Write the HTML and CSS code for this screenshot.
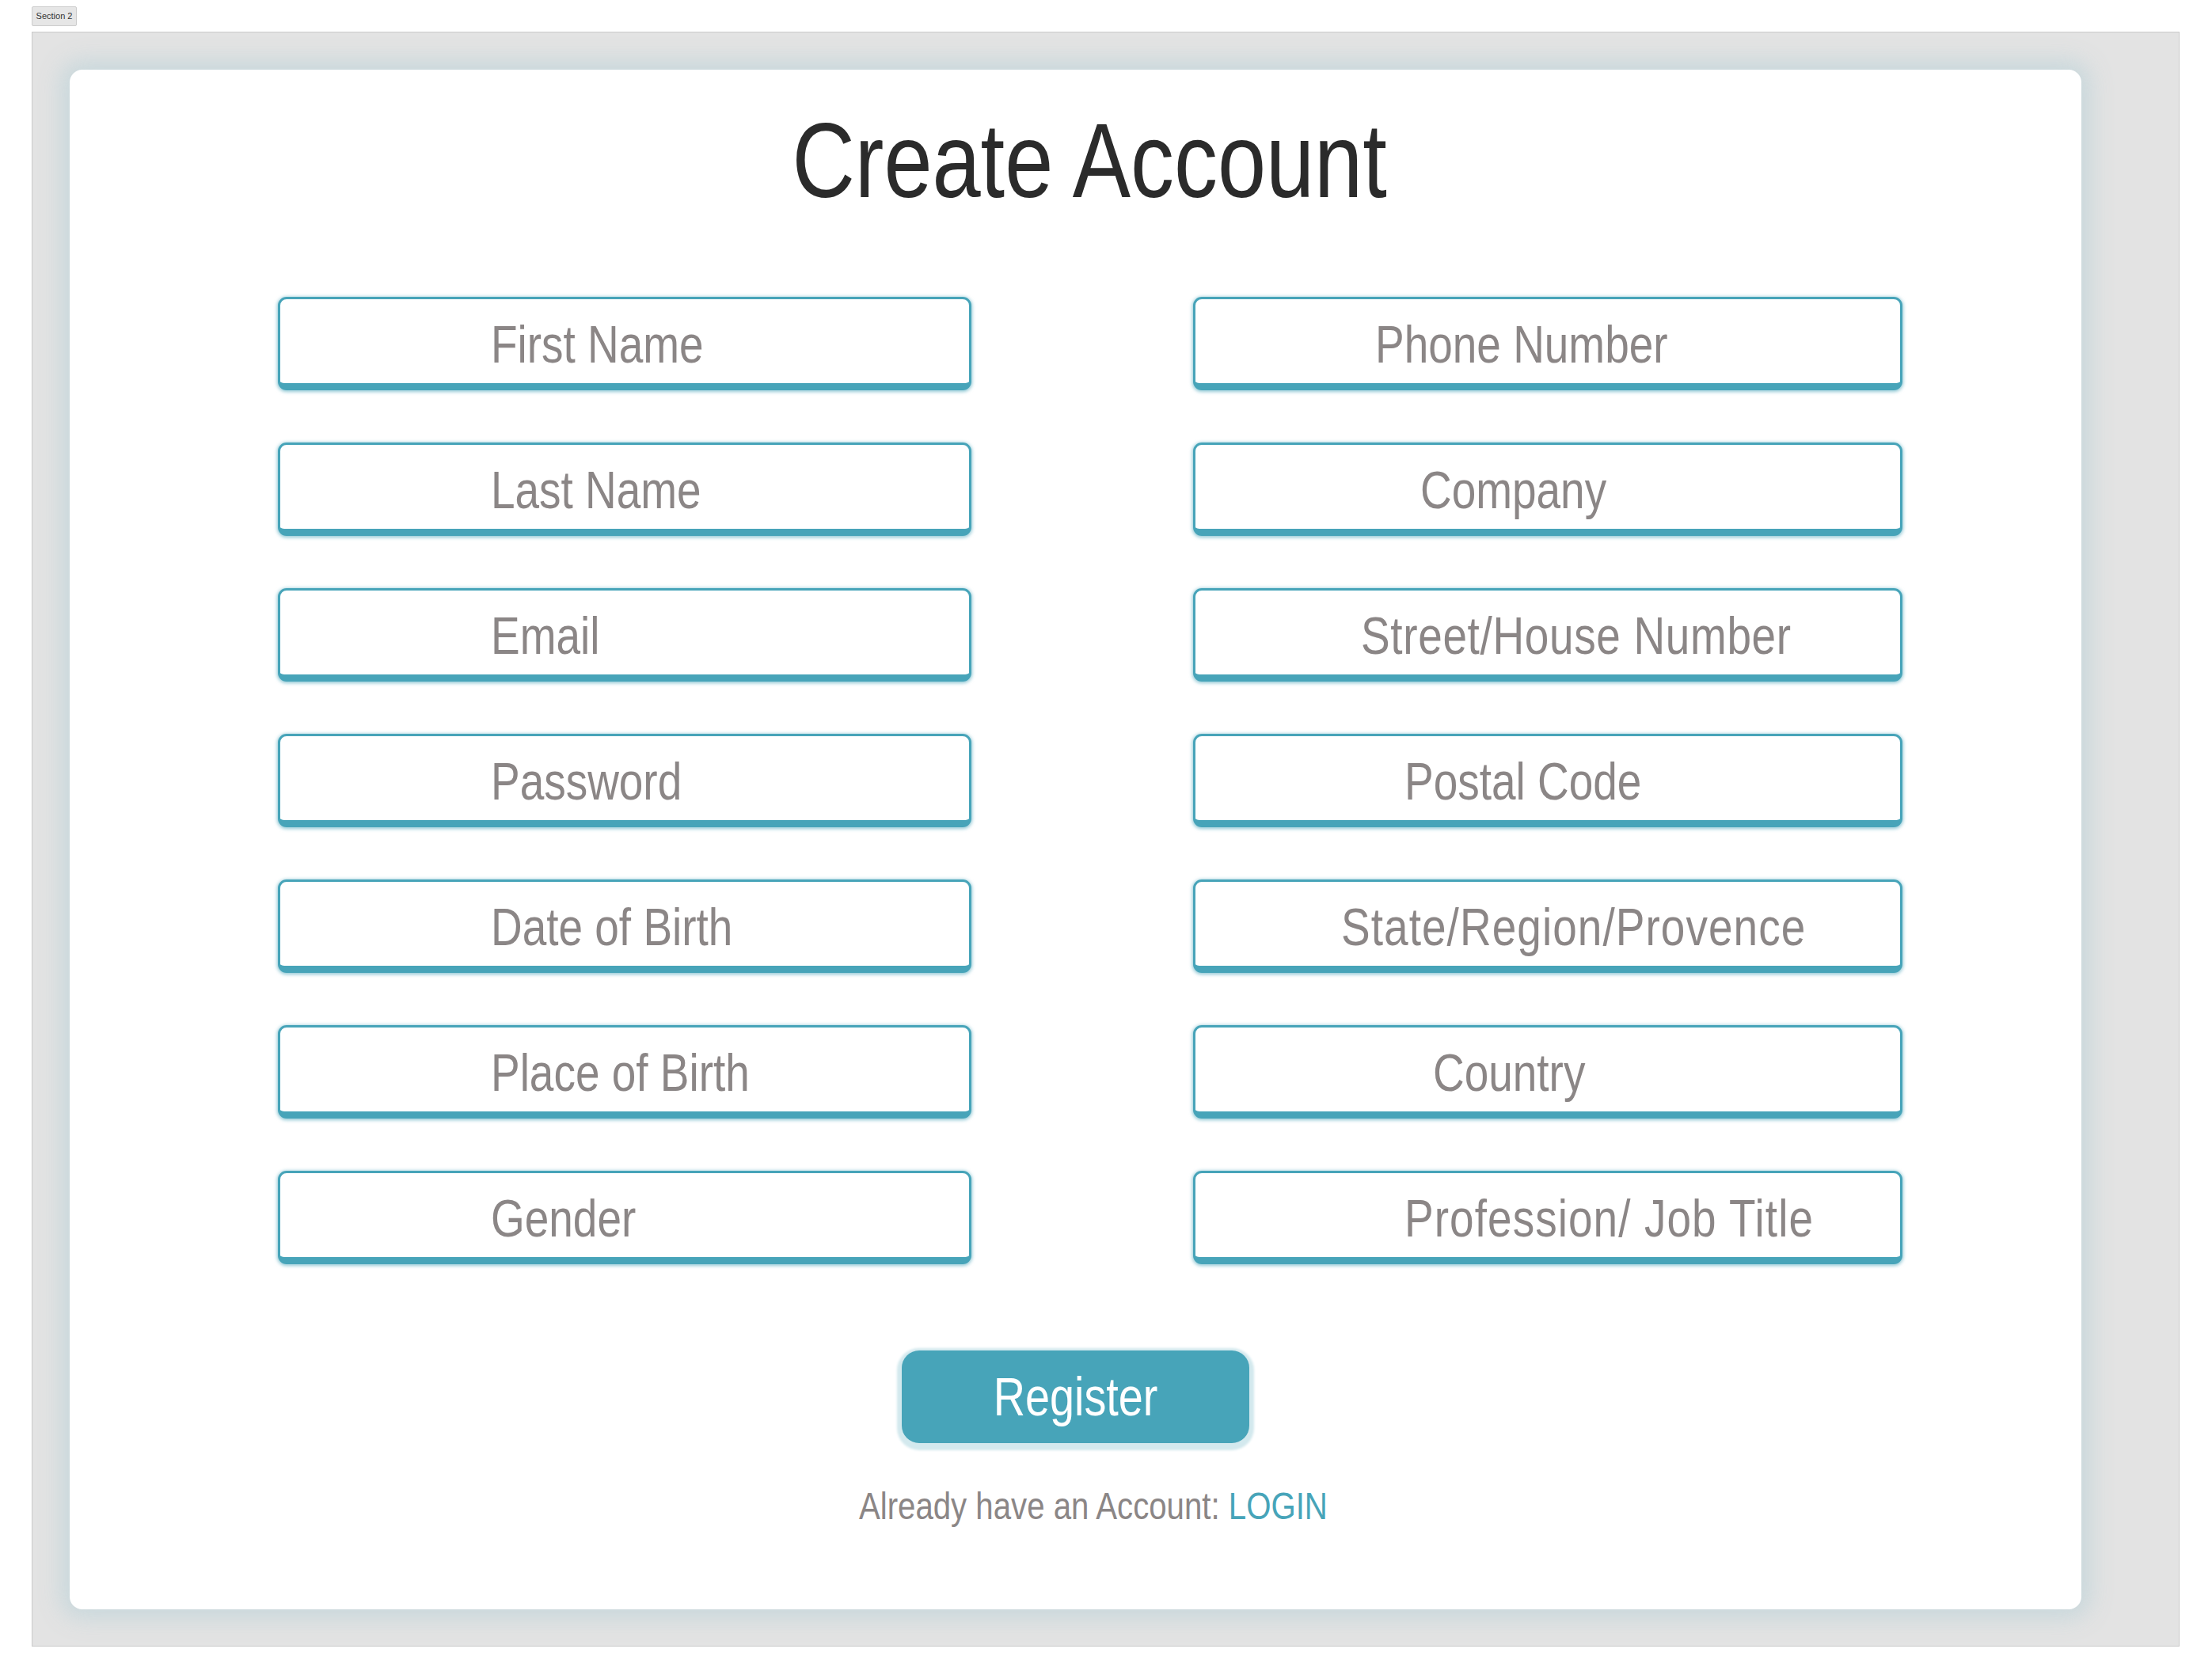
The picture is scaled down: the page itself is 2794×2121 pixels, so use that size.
FILE: index.html
```html
<!DOCTYPE html>
<html lang="en">
<head>
<meta charset="utf-8">
<title>Create Account</title>
<link rel="stylesheet" href="styles.css">
</head>
<body>
<div class="section-tag">Section 2</div>
<div class="frame">
  <div class="card">
    <h1 class="title"><span class="narrow narrow-center">Create Account</span></h1>
    <div class="fields">
      <div class="col col-left">
        <div class="field"><span class="narrow">First Name</span></div>
        <div class="field"><span class="narrow">Last Name</span></div>
        <div class="field"><span class="narrow">Email</span></div>
        <div class="field"><span class="narrow">Password</span></div>
        <div class="field"><span class="narrow">Date of Birth</span></div>
        <div class="field"><span class="narrow">Place of Birth</span></div>
        <div class="field"><span class="narrow">Gender</span></div>
      </div>
      <div class="col col-right">
        <div class="field f-phone"><span class="narrow">Phone Number</span></div>
        <div class="field f-company"><span class="narrow">Company</span></div>
        <div class="field f-street"><span class="narrow">Street/House Number</span></div>
        <div class="field f-postal"><span class="narrow">Postal Code</span></div>
        <div class="field f-state"><span class="narrow">State/Region/Provence</span></div>
        <div class="field f-country"><span class="narrow">Country</span></div>
        <div class="field f-job"><span class="narrow">Profession/ Job Title</span></div>
      </div>
    </div>
    <div class="actions">
      <button class="register" type="button"><span class="narrow narrow-center">Register</span></button>
    </div>
    <p class="login-line"><span class="narrow narrow-center">Already have an Account: <a class="login-link" href="#">LOGIN</a></span></p>
  </div>
</div>
</body>
</html>
```
FILE: styles.css
```css
* { box-sizing: border-box; }

html, body {
  margin: 0;
  padding: 0;
  background: #ffffff;
}

body {
  width: 2794px;
  height: 2121px;
  padding: 8px 0 0 40px;
  font-family: "Liberation Sans", Arial, sans-serif;
}

.narrow {
  display: inline-block;
  transform: scaleX(0.82);
  transform-origin: 0 50%;
  white-space: nowrap;
}

.narrow-center {
  transform-origin: 50% 50%;
}

.section-tag {
  width: 57px;
  height: 25px;
  font-size: 11px;
  line-height: 23px;
  text-align: center;
  color: #333;
  background: #e6e6e6;
  border: 1px solid #cccccc;
  border-radius: 2px;
}

.frame {
  margin-top: 7px;
  width: 2713px;
  height: 2040px;
  background: #e3e3e3;
  border: 1px solid #c9c9c9;
  padding: 47px 0 0 47px;
}

.card {
  width: 2541px;
  height: 1945px;
  background: #ffffff;
  border-radius: 16px;
  box-shadow: 0 0 28px 12px rgba(196, 214, 219, 0.85);
  padding-top: 48px;
}

.title {
  margin: 0;
  padding-left: 36px;
  text-align: center;
  font-weight: normal;
  font-size: 134px;
  line-height: 134px;
  color: #2b2b2b;
}

.fields {
  display: flex;
  margin-top: 105px;
  padding-left: 263px;
  gap: 280px;
}

.col {
  display: flex;
  flex-direction: column;
  gap: 66px;
}

.col-left { width: 876px; }
.col-right { width: 896px; }

.field {
  height: 118px;
  border: 3px solid #47a4b9;
  border-bottom-width: 9px;
  border-radius: 11px;
  background: #ffffff;
  box-shadow: 0 1px 4px 1px rgba(71, 164, 185, 0.6);
  padding-top: 8px;
  padding-left: 266px;
  font-size: 67px;
  line-height: 98px;
  color: #8b8686;
  white-space: nowrap;
}

.col-right .field { padding-left: 227px; }
.col-right .f-company { padding-left: 284px; }
.col-right .f-street { padding-left: 209px; letter-spacing: 0.8px; }
.col-right .f-postal { padding-left: 264px; }
.col-right .f-state { padding-left: 184px; letter-spacing: 1.3px; }
.col-right .f-country { padding-left: 300px; }
.col-right .f-job { padding-left: 264px; letter-spacing: 1.3px; }

.actions {
  display: flex;
  justify-content: center;
  margin-top: 109px;
}

.register {
  width: 439px;
  height: 117px;
  border: none;
  border-radius: 22px;
  background: #47a4b9;
  color: #ffffff;
  font-family: inherit;
  font-size: 68px;
  line-height: 117px;
  padding: 0;
  box-shadow: 0 3px 3px 6px #d3e9ee;
}

.login-line {
  margin: 55px 0 0;
  padding-left: 44px;
  text-align: center;
  font-size: 49px;
  line-height: 49px;
  color: #8b8686;
}

.login-link {
  color: #47a4b9;
  text-decoration: none;
}
```
